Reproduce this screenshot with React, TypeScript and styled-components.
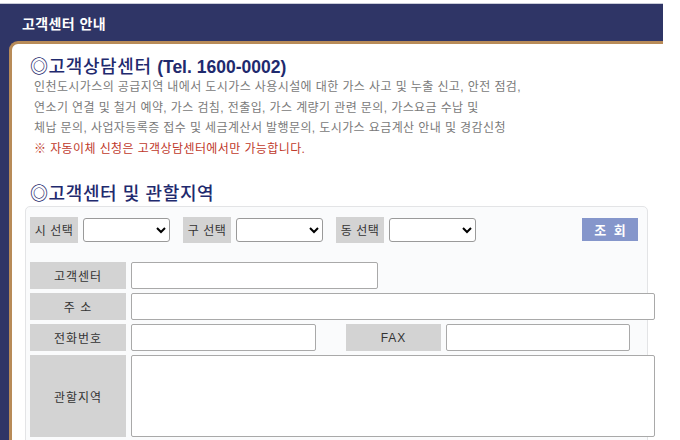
import React from "react";
import styled, { createGlobalStyle } from "styled-components";

const GlobalStyle = createGlobalStyle`
  body {
    margin: 0;
    background: #ffffff;
    font-family: "Liberation Sans", "Noto Sans CJK KR", sans-serif;
  }
`;

const Page = styled.div`
  padding-top: 3px;
`;

// navy outer frame
const Frame = styled.div`
  width: 663px;
  min-height: 436px;
  background: #2f3566;
  border-top: 1px solid #c9ccd8;
  display: flex;
  flex-direction: column;
`;

const Header = styled.div`
  height: 37px;
  padding-left: 22px;
  display: flex;
  align-items: center;
  color: #ffffff;
  font-size: 14px;
  font-weight: 700;
  letter-spacing: 0.4px;
`;

const Panel = styled.div`
  flex: 1;
  margin-left: 9px;
  background: #ffffff;
  border-top: 3px solid #b88b58;
  border-left: 3px solid #b88b58;
  border-top-left-radius: 9px;
  padding: 9px 0 0 18px;
`;

const Title = styled.h2<{ gap?: number }>`
  margin: ${(p) => p.gap ?? 0}px 0 0;
  font-size: 18px;
  font-weight: 500;
  line-height: 20px;
  color: #1f2a6e;
  letter-spacing: 0.6px;

  & > b {
    font-weight: 700;
    font-size: 17.5px;
    letter-spacing: 0;
  }
`;

const Desc = styled.p<{ warn?: boolean }>`
  margin: 0;
  padding-left: 4px;
  font-size: 12px;
  line-height: 20.5px;
  color: ${(p) => (p.warn ? "#c0392b" : "#7a7a7a")};
  letter-spacing: 0.4px;
`;

const FormBox = styled.div`
  margin: 2px 0 0 -5px;
  width: 608px;
  min-height: 240px;
  background: #fafbfc;
  border: 1px solid #e3e4e6;
  border-radius: 5px;
  padding: 9px 9px 0 4px;
`;

const SearchRow = styled.div`
  display: flex;
  align-items: center;
  height: 27px;
`;

const SearchGroup = styled.div`
  display: flex;
  align-items: center;
  gap: 5px;
  margin-right: 13px;
`;

const Label = styled.div<{ w: number; h?: number }>`
  width: ${(p) => p.w}px;
  height: ${(p) => p.h ?? 27}px;
  flex-shrink: 0;
  background: #d3d3d3;
  color: #333333;
  font-size: 12px;
  display: flex;
  align-items: center;
  justify-content: center;
  letter-spacing: ${(p) => (p.w < 60 ? 0.5 : 1)}px;
`;

const Select = styled.select`
  width: 87px;
  height: 24px;
  border: 1px solid #9a9a9a;
  border-radius: 3px;
  background: #ffffff;
`;

const SearchButton = styled.button`
  margin-left: auto;
  width: 56px;
  height: 23px;
  border: none;
  background: #8596cb;
  color: #ffffff;
  font-family: inherit;
  font-size: 13px;
  font-weight: 700;
  letter-spacing: 2px;
  padding: 0 0 0 2px;
`;

const Table = styled.div`
  margin-top: 19px;
  display: flex;
  flex-direction: column;
  gap: 4px;
  width: 625px;
`;

const Row = styled.div`
  display: flex;
  gap: 5px;
`;

const Field = styled.input<{ w: number }>`
  width: ${(p) => p.w}px;
  height: 27px;
  box-sizing: border-box;
  border: 1px solid #a9a9a9;
  border-radius: 2px;
  background: #ffffff;
`;

const Area = styled.textarea`
  width: 524px;
  height: 82px;
  box-sizing: border-box;
  border: 1px solid #a9a9a9;
  border-radius: 2px;
  background: #ffffff;
  resize: none;
`;

const Spacer = styled.div<{ w: number }>`
  width: ${(p) => p.w}px;
`;

const regions = ["시 선택", "구 선택", "동 선택"];

export default function App() {
  return (
    <Page>
      <GlobalStyle />
      <Frame>
        <Header>고객센터 안내</Header>
        <Panel>
          <Title gap={4}>
            ◎고객상담센터 <b>(Tel. 1600-0002)</b>
          </Title>
          <Desc>
            인천도시가스의 공급지역 내에서 도시가스 사용시설에 대한 가스 사고 및 누출 신고, 안전 점검,
          </Desc>
          <Desc>연소기 연결 및 철거 예약, 가스 검침, 전출입, 가스 계량기 관련 문의, 가스요금 수납 및</Desc>
          <Desc>체납 문의, 사업자등록증 접수 및 세금계산서 발행문의, 도시가스 요금계산 안내 및 경감신청</Desc>
          <Desc warn>※ 자동이체 신청은 고객상담센터에서만 가능합니다.</Desc>

          <Title gap={25}>◎고객센터 및 관할지역</Title>
          <FormBox>
            <SearchRow>
              {regions.map((r) => (
                <SearchGroup key={r}>
                  <Label w={48} h={26}>
                    {r}
                  </Label>
                  <Select>
                    <option></option>
                  </Select>
                </SearchGroup>
              ))}
              <SearchButton>조 회</SearchButton>
            </SearchRow>

            <Table>
              <Row>
                <Label w={96}>고객센터</Label>
                <Field w={247} />
              </Row>
              <Row>
                <Label w={96}>주 소</Label>
                <Field w={524} />
              </Row>
              <Row>
                <Label w={96}>전화번호</Label>
                <Field w={185} />
                <Spacer w={20} />
                <Label w={95}>FAX</Label>
                <Field w={184} />
              </Row>
              <Row>
                <Label w={96} h={82}>
                  관할지역
                </Label>
                <Area />
              </Row>
            </Table>
          </FormBox>
        </Panel>
      </Frame>
    </Page>
  );
}
